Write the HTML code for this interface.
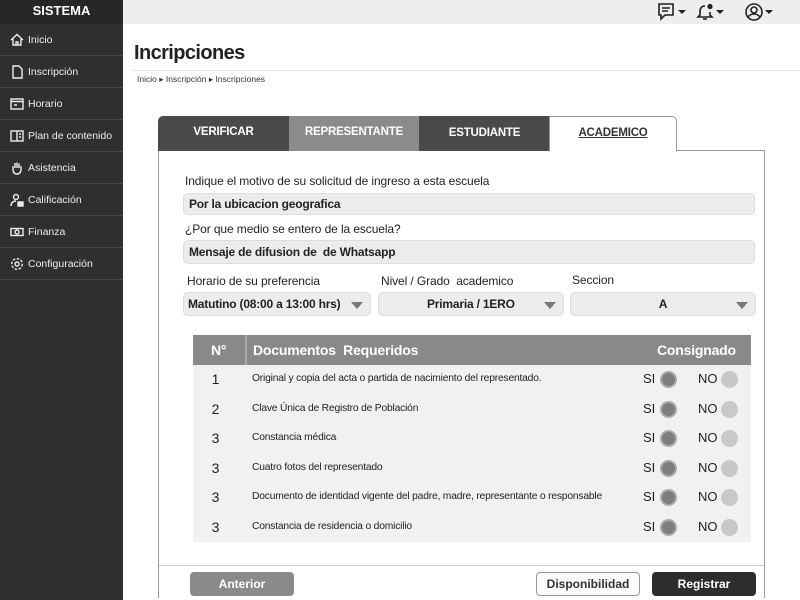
<!DOCTYPE html>
<html><head><meta charset="utf-8"><style>
*{box-sizing:border-box;margin:0;padding:0}
body{width:800px;height:600px;overflow:hidden;background:#fff;font-family:"Liberation Sans",sans-serif;position:relative;color:#222}
.sb{position:absolute;left:0;top:0;width:123px;height:600px;background:#2f2f2f;color:#eee}
.sb h1{height:24px;font-size:13px;text-align:center;line-height:22px;font-weight:bold;color:#fff;background:#262626}
.sb .it{height:32px;border-bottom:1px solid #454545;font-size:10.5px;display:flex;align-items:center;padding-left:10px;gap:4px}
.sb .it svg{width:14px;height:14px;fill:none;stroke:#eee;stroke-width:1.4}
.top{position:absolute;left:123px;top:0;right:0;height:24px;background:#efeded}
.abs{position:absolute}
.tab{position:absolute;top:116px;height:35px;font-size:11.5px;font-weight:bold;color:#fff;text-align:center;line-height:33px;letter-spacing:-0.2px}
.lbl{position:absolute;font-size:12px;color:#222;letter-spacing:-0.1px}
.inp{position:absolute;background:#ececec;border:1px solid #ddd;border-radius:5px;font-size:12px;font-weight:bold;padding-left:5px;line-height:20px;letter-spacing:-0.2px}
.sel{position:absolute;top:292px;height:24px;background:#ececec;border:1px solid #ddd;border-radius:5px;font-size:12px;font-weight:bold;line-height:22px;letter-spacing:-0.2px}
.arr{position:absolute;right:7px;top:9px;width:0;height:0;border-left:6px solid transparent;border-right:6px solid transparent;border-top:7px solid #777}
.row{position:absolute;left:193px;width:558px;height:29.5px;background:#f1f1f1;font-size:10.5px}
.row .n{position:absolute;left:0;width:45px;text-align:center;font-size:14px;top:6px}
.row .t{position:absolute;left:59px;top:8px;font-size:10.3px;letter-spacing:-0.2px}
.row .si{position:absolute;left:450px;top:6px;font-size:13px}
.row .no{position:absolute;left:505px;top:6px;font-size:13px}
.d1{position:absolute;left:467px;top:6px;width:17px;height:17px;border-radius:50%;background:#7e7e7e;border:2px solid #aaa}
.d2{position:absolute;left:528px;top:6px;width:17px;height:17px;border-radius:50%;background:#c8c8c8}
.btn{position:absolute;top:572px;height:24px;border-radius:4px;font-size:12px;font-weight:bold;text-align:center;line-height:24px}
</style></head><body>
<div class="sb">
<h1>SISTEMA</h1>
<div class="it"><svg viewBox="0 0 14 14"><path d="M1 7L7 1.5 13 7M3 6v6h8V6M6 12V9h2v3"/></svg>Inicio</div>
<div class="it"><svg viewBox="0 0 14 14"><path d="M3 1h6l3 3v9H3z"/></svg>Inscripción</div>
<div class="it"><svg viewBox="0 0 14 14"><rect x="1" y="2" width="12" height="10"/><path d="M1 4.5h12M4 8h3"/></svg>Horario</div>
<div class="it"><svg viewBox="0 0 14 14"><rect x="1" y="2" width="12" height="10"/><path d="M7 2v10M9 5h2M9 8h2"/></svg>Plan de contenido</div>
<div class="it"><svg viewBox="0 0 14 14"><path d="M3 8V5M5 7V2M7 7V1.5M9 7V2.5M11 8V5M3 8c0 4 2 5 4 5s4-1 4-5"/></svg>Asistencia</div>
<div class="it"><svg viewBox="0 0 14 14"><circle cx="6" cy="4" r="2.5"/><path d="M1 13c0-3 2-5 5-5"/><rect x="8" y="9" width="5" height="4" fill="#eee"/></svg>Calificación</div>
<div class="it"><svg viewBox="0 0 14 14"><rect x="1" y="3.5" width="12" height="7"/><circle cx="7" cy="7" r="2"/></svg>Finanza</div>
<div class="it"><svg viewBox="0 0 14 14"><circle cx="7" cy="7" r="2"/><circle cx="7" cy="7" r="5.3" stroke-dasharray="2.5 1.6"/></svg>Configuración</div>
</div>
<div class="top"></div>
<svg class="abs" style="left:656px;top:2px" width="140" height="20" viewBox="0 0 140 20" fill="none" stroke="#222" stroke-width="1.6">
<path d="M3 2h14v11H9l-4 4v-4H3z M6 6h8M6 9h6"/><path d="M22 8l4 4 4-4z" fill="#222" stroke="none"/>
<path d="M49 4c-4 0-5 3-5 6v3l-2 2h14l-2-2v-3M47 17h4"/><circle cx="54" cy="4.5" r="1.8" fill="#222"/><path d="M60 8l4 4 4-4z" fill="#222" stroke="none"/>
<circle cx="98" cy="10" r="8"/><circle cx="98" cy="8" r="3"/><path d="M92 15c3-4 9-4 12 0"/><path d="M109 8l4 4 4-4z" fill="#222" stroke="none"/>
</svg>
<div class="abs" style="left:134px;top:42px;font-size:20px;font-weight:bold;letter-spacing:-0.6px">Incripciones</div>
<div class="abs" style="left:133px;top:70px;width:667px;border-top:1px solid #e4e4e4"></div>
<div class="abs" style="left:137px;top:74px;font-size:8.5px;color:#333">Inicio ▸ Inscripción ▸ Inscripciones</div>
<div class="abs" style="left:158px;top:150px;width:607px;height:448px;border:1px solid #999;border-bottom:none"></div>
<div class="tab" style="left:158px;width:131px;background:#4a4a4a;border-radius:5px 0 0 0">VERIFICAR</div>
<div class="tab" style="left:289px;width:130px;background:#8b8b8b">REPRESENTANTE</div>
<div class="tab" style="left:419px;width:131px;background:#4a4a4a;line-height:35px">ESTUDIANTE</div>
<div class="tab" style="left:549px;width:128px;background:#fff;border:1px solid #999;border-bottom:1px solid #fff;border-radius:0 5px 0 0;color:#333;height:36px"><span style="text-decoration:underline">ACADEMICO</span></div>
<div class="lbl" style="left:185px;top:174px">Indique el motivo de su solicitud de ingreso a esta escuela</div>
<div class="inp" style="left:183px;top:193px;width:572px;height:22px">Por la ubicacion geografica</div>
<div class="lbl" style="left:185px;top:222px">¿Por que medio se entero de la escuela?</div>
<div class="inp" style="left:183px;top:240px;width:572px;height:24px;line-height:22px">Mensaje de difusion de&nbsp; de Whatsapp</div>
<div class="lbl" style="left:187px;top:274px">Horario de su preferencia</div>
<div class="lbl" style="left:381px;top:274px">Nivel / Grado&nbsp; academico</div>
<div class="lbl" style="left:572px;top:273px">Seccion</div>
<div class="sel" style="left:183px;width:188px;padding-left:4px">Matutino (08:00 a 13:00 hrs)<span class="arr"></span></div>
<div class="sel" style="left:378px;width:186px;padding-left:48px">Primaria / 1ERO<span class="arr"></span></div>
<div class="sel" style="left:570px;width:186px;text-align:center">A<span class="arr"></span></div>
<div class="abs" style="left:193px;top:335px;width:558px;height:30px;background:#898989;color:#fff;font-weight:bold;font-size:14px;letter-spacing:-0.2px">
<span class="abs" style="left:18px;top:7px">N°</span>
<span class="abs" style="left:52px;top:0;width:2px;height:30px;background:#aaa"></span>
<span class="abs" style="left:60px;top:7px">Documentos&nbsp; Requeridos</span>
<span class="abs" style="left:464px;top:7px">Consignado</span></div>
<div class="abs" style="left:245px;top:365px;width:1px;height:177px;background:#fff"></div>
<div class="row" style="top:365px"><span class="n">1</span><span class="t">Original y copia del acta o partida de nacimiento del representado.</span><span class="si">SI</span><span class="d1"></span><span class="no">NO</span><span class="d2"></span></div>
<div class="row" style="top:394.5px"><span class="n">2</span><span class="t">Clave Única de Registro de Población</span><span class="si">SI</span><span class="d1"></span><span class="no">NO</span><span class="d2"></span></div>
<div class="row" style="top:424px"><span class="n">3</span><span class="t">Constancia médica</span><span class="si">SI</span><span class="d1"></span><span class="no">NO</span><span class="d2"></span></div>
<div class="row" style="top:453.5px"><span class="n">3</span><span class="t">Cuatro fotos del representado</span><span class="si">SI</span><span class="d1"></span><span class="no">NO</span><span class="d2"></span></div>
<div class="row" style="top:483px"><span class="n">3</span><span class="t">Documento de identidad vigente del padre, madre, representante o responsable</span><span class="si">SI</span><span class="d1"></span><span class="no">NO</span><span class="d2"></span></div>
<div class="row" style="top:512.5px;height:29px"><span class="n">3</span><span class="t">Constancia de residencia o domicilio</span><span class="si">SI</span><span class="d1"></span><span class="no">NO</span><span class="d2"></span></div>
<div class="abs" style="left:159px;top:565px;width:605px;border-top:1px solid #ccc"></div>
<div class="btn" style="left:190px;width:104px;background:#8a8a8a;color:#fff">Anterior</div>
<div class="btn" style="left:536px;width:104px;background:#fafafa;border:1px solid #999;color:#333;line-height:22px">Disponibilidad</div>
<div class="btn" style="left:652px;width:104px;background:#2d2d2d;color:#fff">Registrar</div>
</body></html>
